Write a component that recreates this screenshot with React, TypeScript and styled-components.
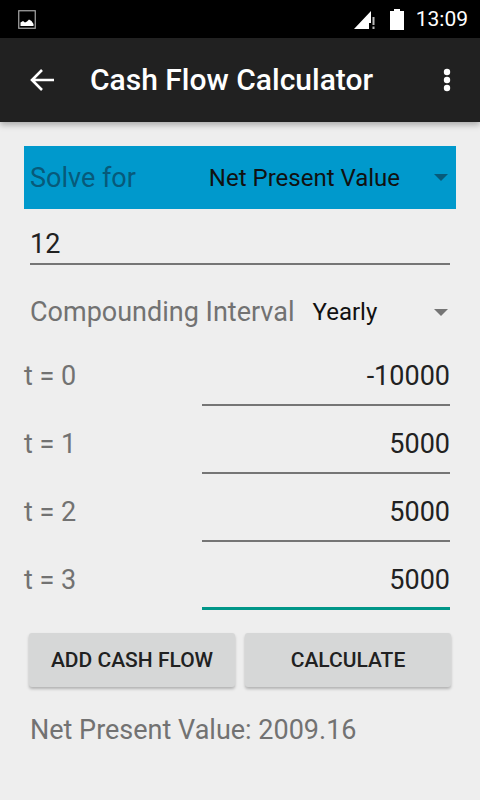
import React from "react";
import styled, { createGlobalStyle } from "styled-components";

const Global = createGlobalStyle`
  html, body { margin: 0; padding: 0; background: #eeeeee; }
  body { font-family: Roboto, "Liberation Sans", sans-serif; }
  * { box-sizing: border-box; }
`;

const Screen = styled.div`
  width: 480px;
  height: 800px;
  overflow: hidden;
  display: flex;
  flex-direction: column;
  background: #eeeeee;
`;

const StatusBar = styled.div`
  height: 38px;
  flex: none;
  background: #000;
  display: flex;
  align-items: center;
  padding: 0 12px 0 18px;
  color: #fff;
`;

const StatusRight = styled.div`
  margin-left: auto;
  display: flex;
  align-items: center;
`;

const Clock = styled.span`
  font-size: 21px;
  line-height: 38px;
  margin-left: 12px;
`;

const Toolbar = styled.header`
  height: 84px;
  flex: none;
  background: #212121;
  display: flex;
  align-items: center;
  padding: 0 0 0 30px;
  color: #fff;
  box-shadow: 0 3px 6px rgba(0, 0, 0, 0.28);
`;

const Title = styled.h1`
  margin: 0 0 0 36px;
  font-size: 30px;
  font-weight: 500;
  line-height: 84px;
  white-space: nowrap;
`;

const MenuButton = styled.div`
  margin-left: auto;
  width: 66px;
  display: flex;
  justify-content: center;
`;

const Content = styled.main`
  padding: 24px 24px 0;
  display: flex;
  flex-direction: column;
`;

const SolveRow = styled.div`
  height: 63px;
  background: #0099cc;
  display: flex;
  align-items: center;
  padding: 0 8px 0 6px;
`;

const Label = styled.span<{ $tone?: string }>`
  font-size: 27px;
  line-height: 36px;
  color: ${(p) => p.$tone ?? "#727272"};
  white-space: nowrap;
`;

const SpinnerValue = styled.span<{ $width: number }>`
  font-size: 24px;
  line-height: 32px;
  color: #111;
  width: ${(p) => p.$width}px;
  white-space: nowrap;
`;

const Arrow = styled.span<{ $color: string }>`
  width: 0;
  height: 0;
  border-left: 7px solid transparent;
  border-right: 7px solid transparent;
  border-top: 7px solid ${(p) => p.$color};
`;

const RateField = styled.div`
  margin: 0 6px;
  height: 56px;
  border-bottom: 2px solid #757575;
  font-size: 27px;
  line-height: 36px;
  color: #212121;
  padding-top: 17px;
`;

const IntervalRow = styled.div`
  height: 64px;
  margin-top: 15px;
  display: flex;
  align-items: center;
  padding: 0 8px 0 6px;
`;

const FlowRow = styled.div`
  height: 68px;
  display: flex;
  align-items: flex-start;
  justify-content: space-between;
  padding-right: 6px;
`;

const FlowLabel = styled.span`
  font-size: 27px;
  line-height: 36px;
  margin-top: 14px;
  color: #727272;
`;

const FlowInput = styled.div<{ $focused?: boolean }>`
  width: 248px;
  height: 62px;
  text-align: right;
  font-size: 27px;
  line-height: 36px;
  padding-top: 14px;
  color: #212121;
  border-bottom: ${(p) => (p.$focused ? "3px solid #009688" : "2px solid #757575")};
`;

const Buttons = styled.div`
  display: flex;
  gap: 10px;
  margin: 17px 5px 0;
`;

const Button = styled.button`
  flex: 1;
  height: 54px;
  padding: 0;
  border: 0;
  border-radius: 3px;
  background: #d6d7d7;
  color: #212121;
  font: 500 21px/54px Roboto, sans-serif;
  box-shadow: 0 2px 3px rgba(0, 0, 0, 0.25);
`;

const Result = styled.p`
  margin: 25px 6px 0;
  font-size: 27px;
  line-height: 36px;
  color: #727272;
`;

export default function App() {
  return (
    <Screen>
      <Global />
      <StatusBar>
        <svg width="18" height="19" viewBox="0 0 18 19">
          <rect x="0.75" y="0.75" width="16.5" height="17.5" fill="none" stroke="#aaa" strokeWidth="1.2" />
          <path d="M2.5 16V12.5L5 11l2 1.5 2-1 2-2 2.5 1.5 2 3V16z" fill="#fff" />
        </svg>
        <StatusRight>
          <svg width="22" height="22" viewBox="0 0 22 22">
            <path d="M0 21L17 3v12h-2v6z" fill="#fff" />
            <rect x="18.5" y="9" width="2" height="8" fill="#bbb" />
            <rect x="18.5" y="18.5" width="2" height="2.5" fill="#bbb" />
          </svg>
          <svg width="14" height="22" viewBox="0 0 14 22" style={{ marginLeft: 14 }}>
            <path d="M4 1h6v2h4v19H0V3h4z" fill="#fff" />
          </svg>
          <Clock>13:09</Clock>
        </StatusRight>
      </StatusBar>
      <Toolbar>
        <svg width="24" height="24" viewBox="0 0 24 24">
          <path d="M24 12H2M12 2L2 12l10 10" fill="none" stroke="#fff" strokeWidth="2.6" />
        </svg>
        <Title>Cash Flow Calculator</Title>
        <MenuButton>
          <svg width="8" height="24" viewBox="0 0 8 24">
            <circle cx="4" cy="4" r="3.2" fill="#fff" />
            <circle cx="4" cy="12" r="3.2" fill="#fff" />
            <circle cx="4" cy="20" r="3.2" fill="#fff" />
          </svg>
        </MenuButton>
      </Toolbar>
      <Content>
        <SolveRow>
          <Label $tone="#075a7a">Solve for</Label>
          <SpinnerValue $width={226} style={{ marginLeft: 73 }}>Net Present Value</SpinnerValue>
          <Arrow $color="#075a7a" />
        </SolveRow>
        <RateField>12</RateField>
        <IntervalRow>
          <Label>Compounding Interval</Label>
          <SpinnerValue $width={121} style={{ marginLeft: 18 }}>Yearly</SpinnerValue>
          <Arrow $color="#757575" />
        </IntervalRow>
        <FlowRow>
          <FlowLabel>t = 0</FlowLabel>
          <FlowInput>-10000</FlowInput>
        </FlowRow>
        <FlowRow>
          <FlowLabel>t = 1</FlowLabel>
          <FlowInput>5000</FlowInput>
        </FlowRow>
        <FlowRow>
          <FlowLabel>t = 2</FlowLabel>
          <FlowInput>5000</FlowInput>
        </FlowRow>
        <FlowRow>
          <FlowLabel>t = 3</FlowLabel>
          <FlowInput $focused>5000</FlowInput>
        </FlowRow>
        <Buttons>
          <Button>ADD CASH FLOW</Button>
          <Button>CALCULATE</Button>
        </Buttons>
        <Result>Net Present Value: 2009.16</Result>
      </Content>
    </Screen>
  );
}
